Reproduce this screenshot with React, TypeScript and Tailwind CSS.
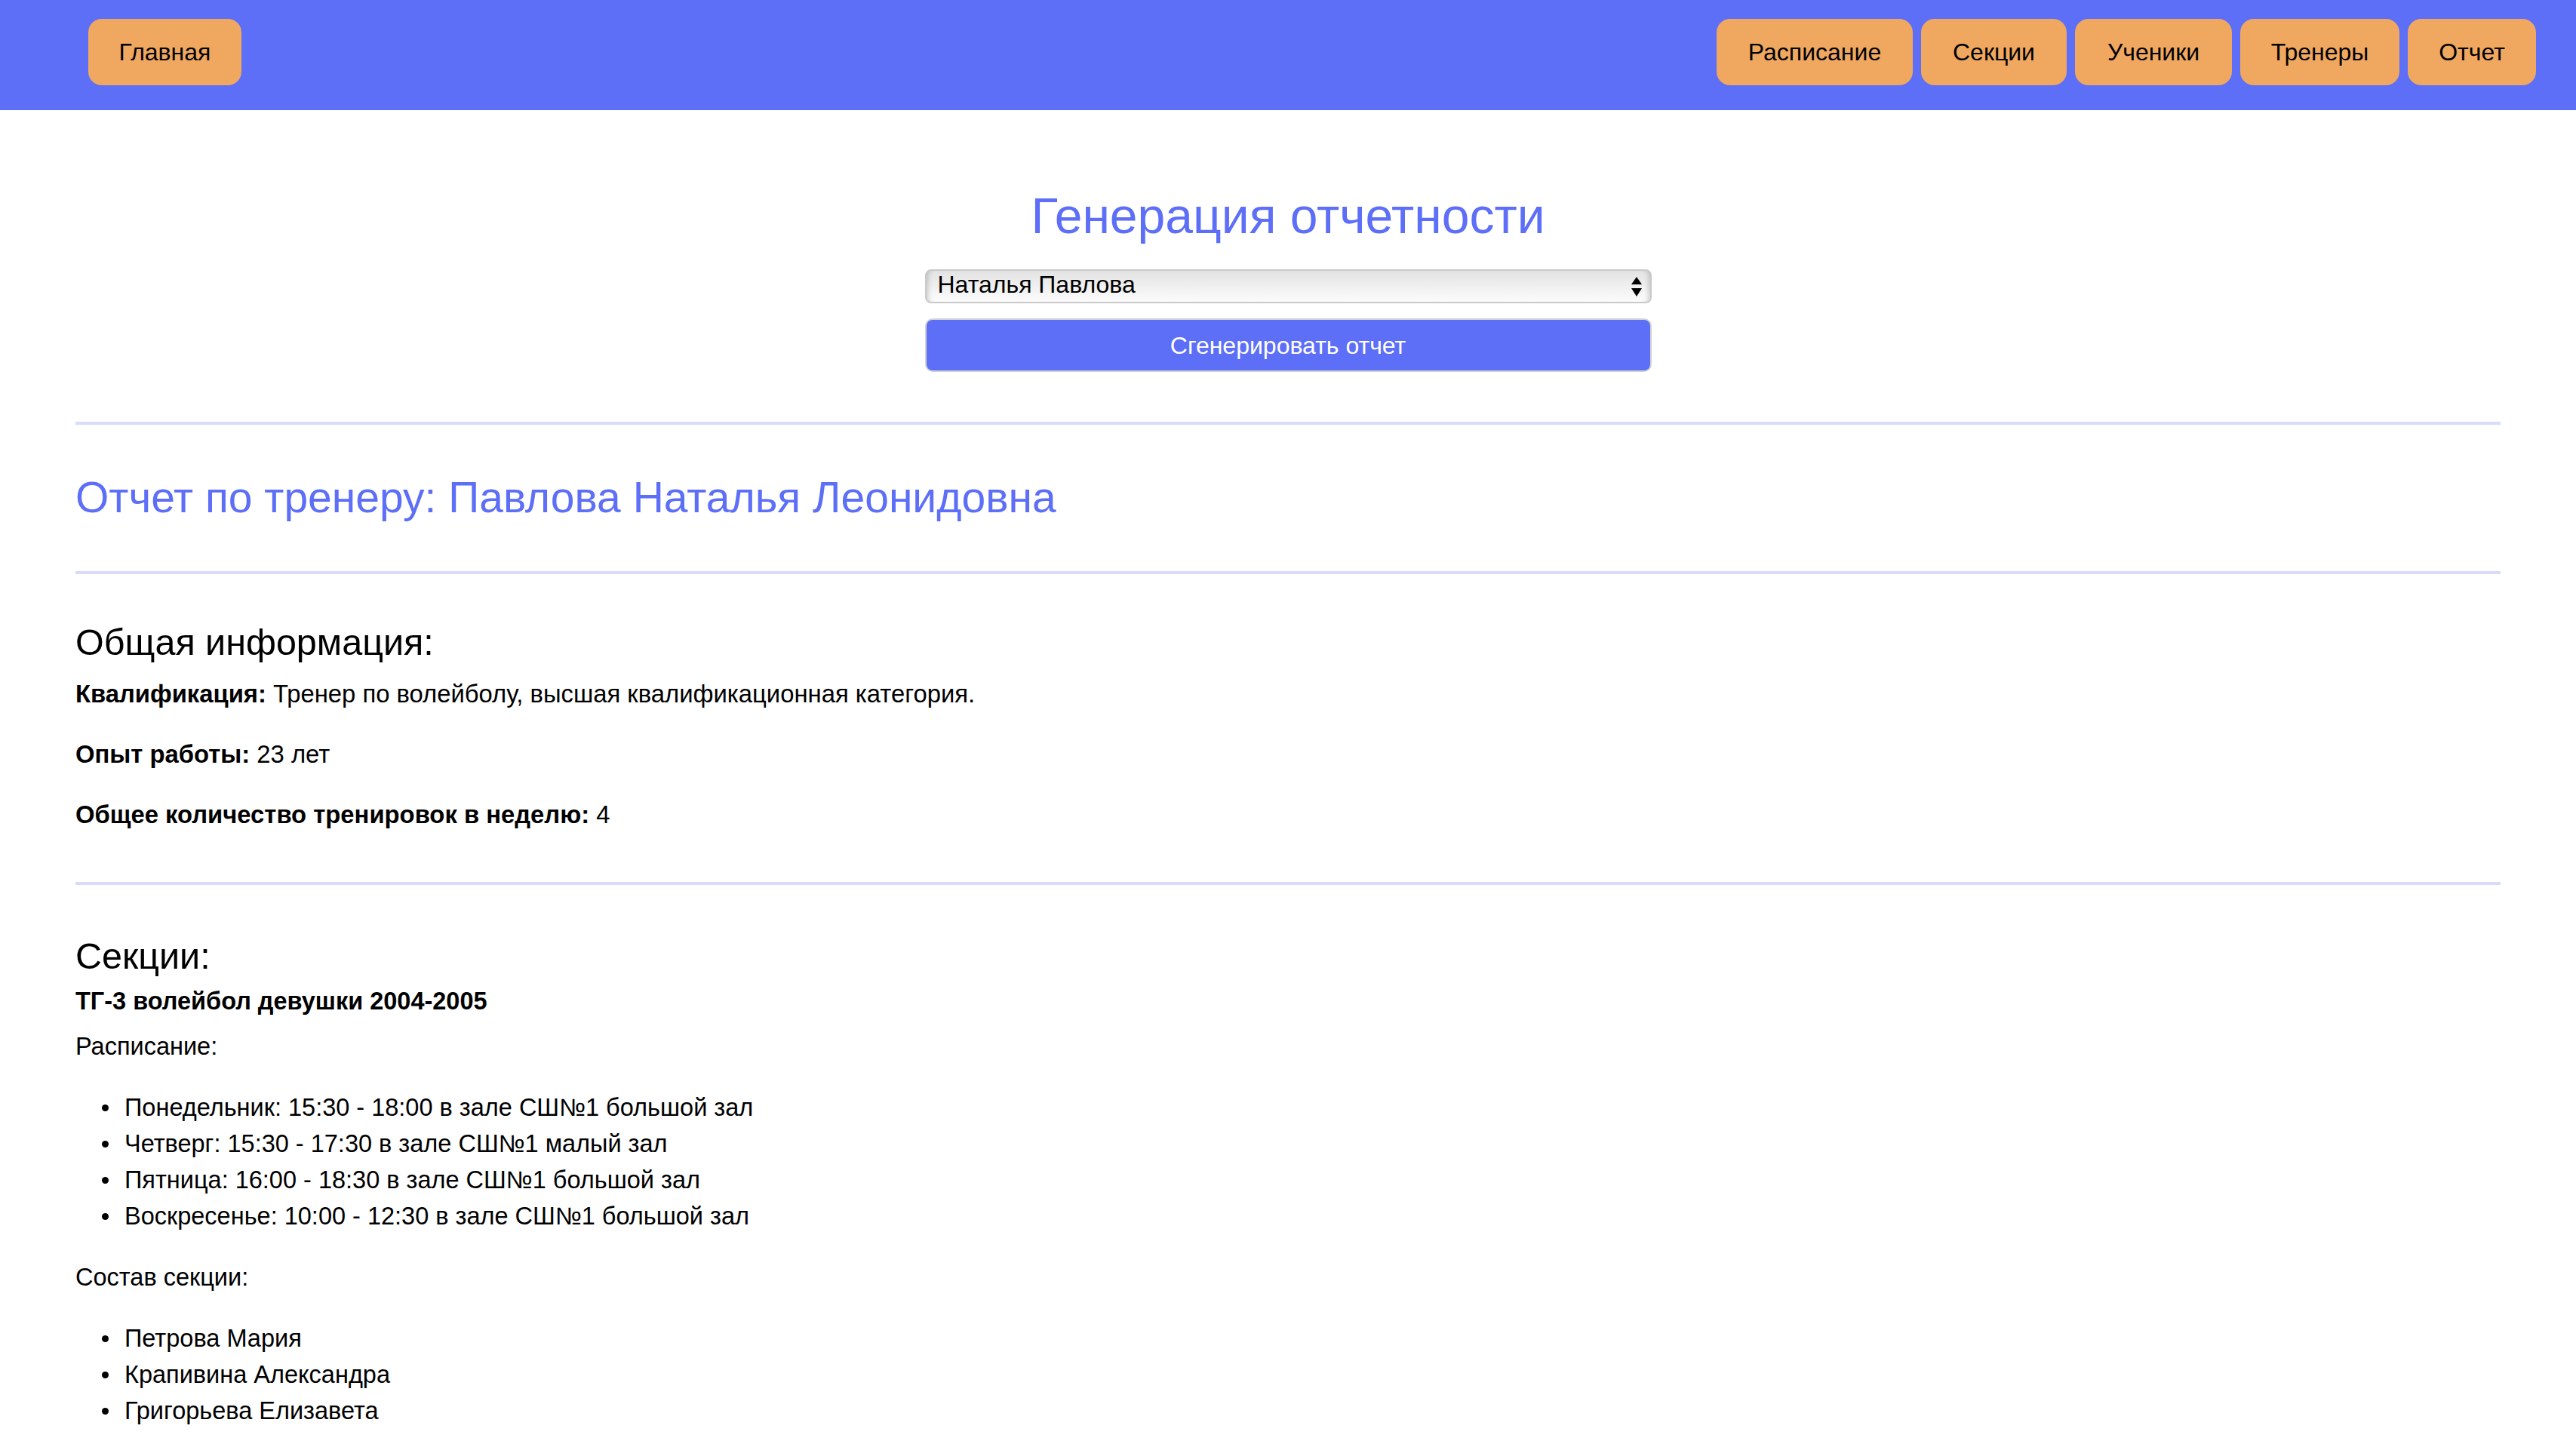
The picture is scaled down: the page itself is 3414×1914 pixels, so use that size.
import React from "react";

const navItems = [
  { label: "Расписание", w: "w-[260px]" },
  { label: "Секции", w: "w-[193px]" },
  { label: "Ученики", w: "w-[208px]" },
  { label: "Тренеры", w: "w-[211px]" },
  { label: "Отчет", w: "w-[170px]" },
];

const schedule = [
  "Понедельник: 15:30 - 18:00 в зале СШ№1 большой зал",
  "Четверг: 15:30 - 17:30 в зале СШ№1 малый зал",
  "Пятница: 16:00 - 18:30 в зале СШ№1 большой зал",
  "Воскресенье: 10:00 - 12:30 в зале СШ№1 большой зал",
];

const members = ["Петрова Мария", "Крапивина Александра", "Григорьева Елизавета"];

function Bullets({ items }: { items: string[] }) {
  return (
    <ul className="mt-[33px] pl-[35px]">
      {items.map((t) => (
        <li key={t} className="flex items-center gap-[21px] leading-[48px]">
          <span className="inline-block h-[9px] w-[9px] shrink-0 rounded-full bg-black" />
          <span>{t}</span>
        </li>
      ))}
    </ul>
  );
}

function Rule({ className }: { className: string }) {
  return <div className={`h-[4px] bg-[#d7dbfc] ${className}`} />;
}

export default function App() {
  return (
    <div className="min-h-screen bg-white text-black font-['Liberation_Sans',Arial,sans-serif]">
      <header className="flex h-[146px] items-start justify-between bg-[#5d6ef7] pl-[117px] pr-[53px] pt-[25px]">
        <button className="flex h-[88px] w-[203px] items-center justify-center rounded-[18px] bg-[#f0a860] text-[32px] text-black">
          Главная
        </button>
        <nav className="flex gap-[11px]">
          {navItems.map((n) => (
            <button
              key={n.label}
              className={`flex h-[88px] ${n.w} items-center justify-center rounded-[18px] bg-[#f0a860] text-[32px] text-black`}
            >
              {n.label}
            </button>
          ))}
        </nav>
      </header>

      <main className="px-[100px] pb-[80px]">
        <section className="flex flex-col items-center pt-[103px]">
          <h1 className="text-[66px] leading-[75px] text-[#5d6ef7]">Генерация отчетности</h1>
          <div className="relative mt-[33px] w-[963px]">
            <select
              defaultValue="pavlova"
              className="h-[45px] w-full appearance-none rounded-[8px] border-2 border-[#c9c9c9] bg-gradient-to-b from-[#e3e3e3] to-[#fcfcfc] pb-[7px] pl-[15px] pt-0 text-[32px] leading-[36px] text-black shadow-[inset_7px_0_6px_-5px_rgba(0,0,0,0.18),inset_-7px_0_6px_-5px_rgba(0,0,0,0.18)] outline-none"
            >
              <option value="pavlova">Наталья Павлова</option>
            </select>
            <svg
              className="pointer-events-none absolute right-[13px] top-[10px]"
              width="14"
              height="26"
              viewBox="0 0 14 26"
            >
              <polygon points="7,0 14,10 0,10" fill="#000" />
              <polygon points="0,15 14,15 7,26" fill="#000" />
            </svg>
          </div>
          <button className="mt-[20px] flex h-[71px] w-[963px] items-center justify-center rounded-[10px] border-2 border-[#d2d2d2] bg-[#5d6ef7] text-[32px] text-white">
            Сгенерировать отчет
          </button>
        </section>

        <Rule className="mt-[66px]" />

        <h2 className="mt-[64px] text-[57px] leading-[65px] text-[#5d6ef7]">
          Отчет по тренеру: Павлова Наталья Леонидовна
        </h2>

        <Rule className="mt-[65px]" />

        <section className="text-[32.8px] leading-[48px]">
          <h3 className="mt-[64px] text-[48.5px] leading-[52px]">Общая информация:</h3>
          <p className="mt-[19px]">
            <b>Квалификация:</b> Тренер по волейболу, высшая квалификационная категория.
          </p>
          <p className="mt-[32px]">
            <b>Опыт работы:</b> 23 лет
          </p>
          <p className="mt-[32px]">
            <b>Общее количество тренировок в неделю:</b> 4
          </p>
        </section>

        <Rule className="mt-[65px]" />

        <section className="text-[32.5px] leading-[48px]">
          <h3 className="mt-[68px] text-[48.5px] leading-[52px]">Секции:</h3>
          <p className="mt-[10px] font-bold">ТГ-3 волейбол девушки 2004-2005</p>
          <p className="mt-[12px]">Расписание:</p>
          <Bullets items={schedule} />
          <p className="mt-[33px]">Состав секции:</p>
          <Bullets items={members} />
        </section>
      </main>
    </div>
  );
}
